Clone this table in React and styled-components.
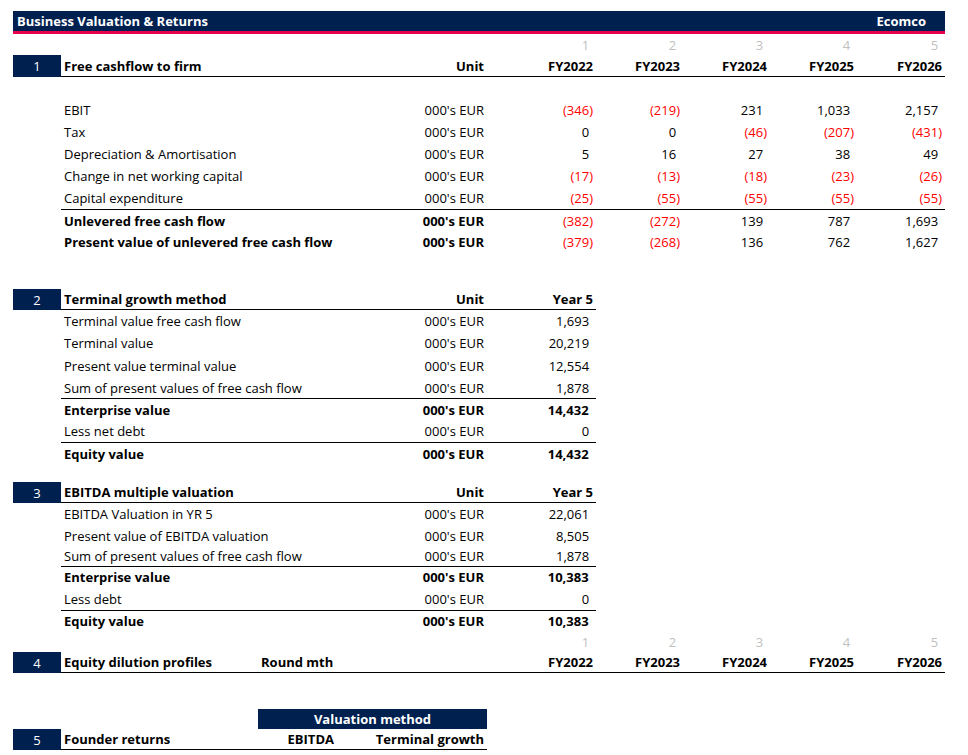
import styled, { createGlobalStyle } from "styled-components";

const NAVY = "#002050";
const PINK = "#e8004f";
const COLS = [197, 79, 150, 109, 87, 87, 87, 88];

const GlobalStyle = createGlobalStyle`
  body {
    margin: 0;
    background: #fff;
    font-family: "Open Sans", "Noto Sans", sans-serif;
    font-size: 13px;
    color: #000;
  }
`;

const Sheet = styled.div`
  padding: 11px 0 0 13px;
  width: 932px;
`;

const TitleBar = styled.div`
  display: flex;
  justify-content: space-between;
  align-items: center;
  height: 20px;
  padding: 0 19px 0 4px;
  background: ${NAVY};
  border-bottom: 3px solid ${PINK};
  color: #fff;
  font-weight: 700;
`;

const Row = styled.div`
  display: flex;
  height: ${(p) => p.h || 22}px;
`;

const NumBox = styled.div`
  width: 48px;
  flex: none;
  background: ${(p) => (p.on ? NAVY : "transparent")};
  color: #fff;
  display: flex;
  align-items: center;
  justify-content: center;
`;

const Body = styled.div`
  display: grid;
  grid-template-columns: ${(p) => COLS.slice(0, p.cols || 8).map((c) => c + "px").join(" ")};
  align-items: center;
  box-sizing: border-box;
  border-top: ${(p) => (p.top ? "1px solid #000" : "none")};
  border-bottom: ${(p) => (p.bottom ? "1px solid #000" : "none")};
  font-weight: ${(p) => (p.bold ? 700 : 400)};
`;

const Label = styled.div`
  grid-column: span ${(p) => p.span || 2};
  padding: 0 3px;
  white-space: nowrap;
`;

const Cell = styled.div`
  padding: 0 3px;
  text-align: right;
  white-space: nowrap;
`;

const Num = styled.div`
  padding: 0 3px;
  text-align: right;
  white-space: nowrap;
  font-weight: ${(p) => (p.plain ? 400 : "inherit")};
  color: ${(p) => (p.neg ? "#ff0000" : p.grey ? "#bfbfbf" : "inherit")};
  &::after {
    content: ")";
    visibility: hidden;
    display: ${(p) => (p.neg ? "none" : "inline")};
  }
`;

const Banner = styled.div`
  grid-column: span 2;
  background: ${NAVY};
  color: #fff;
  font-weight: 700;
  height: 100%;
  display: flex;
  align-items: center;
  justify-content: center;
`;

const Spacer = styled.div`
  height: ${(p) => p.h}px;
`;

const fmt = (v) => {
  const s = Math.abs(v).toLocaleString("en-US");
  return v < 0 ? `(${s})` : s;
};

const Value = ({ v, plain }) => (
  <Num neg={v < 0} plain={plain}>
    {fmt(v)}
  </Num>
);

const years = ["FY2022", "FY2023", "FY2024", "FY2025", "FY2026"];

const fcf = [
  { label: "EBIT", vals: [-346, -219, 231, 1033, 2157] },
  { label: "Tax", vals: [0, 0, -46, -207, -431] },
  { label: "Depreciation & Amortisation", vals: [5, 16, 27, 38, 49] },
  { label: "Change in net working capital", vals: [-17, -13, -18, -23, -26] },
  { label: "Capital expenditure", vals: [-25, -55, -55, -55, -55] },
  { label: "Unlevered free cash flow", vals: [-382, -272, 139, 787, 1693], bold: true, top: true },
  { label: "Present value of unlevered free cash flow", vals: [-379, -268, 136, 762, 1627], bold: true },
];

const terminal = [
  { label: "Terminal value free cash flow", v: 1693, h: 22 },
  { label: "Terminal value", v: 20219, h: 22 },
  { label: "Present value terminal value", v: 12554, h: 23 },
  { label: "Sum of present values of free cash flow", v: 1878, h: 21 },
  { label: "Enterprise value", v: 14432, bold: true, top: true, h: 22 },
  { label: "Less net debt", v: 0, h: 22 },
  { label: "Equity value", v: 14432, bold: true, top: true, h: 22 },
];

const ebitda = [
  { label: "EBITDA Valuation in YR 5", v: 22061, h: 22 },
  { label: "Present value of EBITDA valuation", v: 8505, h: 21 },
  { label: "Sum of present values of free cash flow", v: 1878, h: 20 },
  { label: "Enterprise value", v: 10383, bold: true, top: true, h: 21 },
  { label: "Less debt", v: 0, h: 23 },
  { label: "Equity value", v: 10383, bold: true, top: true, h: 21 },
];

const IndexRow = ({ h }) => (
  <Row h={h}>
    <NumBox />
    <Body>
      <Label span={3} />
      {[1, 2, 3, 4, 5].map((n) => (
        <Num key={n} grey>
          {n}
        </Num>
      ))}
    </Body>
  </Row>
);

const SmallSection = ({ n, title, rows, headerH }) => (
  <>
    <Row h={headerH}>
      <NumBox on>{n}</NumBox>
      <Body cols={4} bold bottom>
        <Label>{title}</Label>
        <Cell>Unit</Cell>
        <Cell>Year 5</Cell>
      </Body>
    </Row>
    {rows.map((r) => (
      <Row key={r.label} h={r.h}>
        <NumBox />
        <Body cols={4} bold={r.bold} top={r.top}>
          <Label>{r.label}</Label>
          <Cell>000's EUR</Cell>
          <Value v={r.v} />
        </Body>
      </Row>
    ))}
  </>
);

export default function App() {
  return (
    <Sheet>
      <GlobalStyle />
      <TitleBar>
        <span>Business Valuation &amp; Returns</span>
        <span>Ecomco</span>
      </TitleBar>

      <IndexRow h={21} />
      <Row h={22}>
        <NumBox on>1</NumBox>
        <Body bold bottom>
          <Label>Free cashflow to firm</Label>
          <Cell>Unit</Cell>
          {years.map((y) => (
            <Cell key={y}>{y}</Cell>
          ))}
        </Body>
      </Row>
      <Spacer h={22} />
      {fcf.map((r) => (
        <Row key={r.label}>
          <NumBox />
          <Body bold={r.bold} top={r.top}>
            <Label>{r.label}</Label>
            <Cell>000's EUR</Cell>
            {r.vals.map((v, i) => (
              <Value key={i} v={v} plain />
            ))}
          </Body>
        </Row>
      ))}

      <Spacer h={36} />
      <SmallSection n={2} title="Terminal growth method" rows={terminal} headerH={21} />

      <Spacer h={18} />
      <SmallSection n={3} title="EBITDA multiple valuation" rows={ebitda} headerH={21} />

      <IndexRow h={21} />
      <Row h={21}>
        <NumBox on>4</NumBox>
        <Body bold bottom>
          <Label span={1}>Equity dilution profiles</Label>
          <Label span={2}>Round mth</Label>
          {years.map((y) => (
            <Cell key={y}>{y}</Cell>
          ))}
        </Body>
      </Row>

      <Spacer h={36} />
      <Row h={20}>
        <NumBox />
        <Body cols={3}>
          <Label span={1} />
          <Banner>Valuation method</Banner>
        </Body>
      </Row>
      <Row h={21}>
        <NumBox on>5</NumBox>
        <Body cols={3} bold bottom>
          <Label span={1}>Founder returns</Label>
          <Cell>EBITDA</Cell>
          <Cell>Terminal growth</Cell>
        </Body>
      </Row>
    </Sheet>
  );
}
